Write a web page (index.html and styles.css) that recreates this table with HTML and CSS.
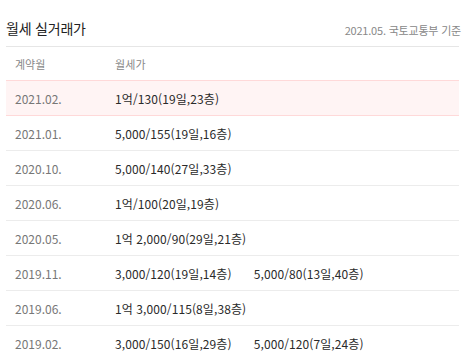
FILE: index.html
```html
<!DOCTYPE html>
<html lang="ko">
<head>
<meta charset="utf-8">
<link rel="stylesheet" href="styles.css">
</head>
<body>
<section class="panel">
  <div class="head">
    <h2 class="title">월세 실거래가</h2>
    <span class="source">2021.05. 국토교통부 기준</span>
  </div>
  <div class="table">
    <div class="row thead"><span class="date">계약월</span><span class="price">월세가</span></div>
    <div class="row active"><span class="date">2021.02.</span><span class="price"><span class="deal">1억/130(19일,23층)</span></span></div>
    <div class="row"><span class="date">2021.01.</span><span class="price"><span class="deal">5,000/155(19일,16층)</span></span></div>
    <div class="row"><span class="date">2020.10.</span><span class="price"><span class="deal">5,000/140(27일,33층)</span></span></div>
    <div class="row"><span class="date">2020.06.</span><span class="price"><span class="deal">1억/100(20일,19층)</span></span></div>
    <div class="row"><span class="date">2020.05.</span><span class="price"><span class="deal">1억 2,000/90(29일,21층)</span></span></div>
    <div class="row"><span class="date">2019.11.</span><span class="price"><span class="deal">3,000/120(19일,14층)</span><span class="deal">5,000/80(13일,40층)</span></span></div>
    <div class="row"><span class="date">2019.06.</span><span class="price"><span class="deal">1억 3,000/115(8일,38층)</span></span></div>
    <div class="row"><span class="date">2019.02.</span><span class="price"><span class="deal">3,000/150(16일,29층)</span><span class="deal">5,000/120(7일,24층)</span></span></div>
  </div>
</section>
</body>
</html>
```
FILE: styles.css
```css
html, body {
  margin: 0;
  padding: 0;
  background: #fff;
}
body {
  font-family: "Noto Sans CJK KR", "Noto Sans", sans-serif;
  color: #222;
}
.panel {
  width: 453px;
  margin-left: 6px;
}
.head {
  height: 36px;
  padding-top: 10px;
  display: flex;
  align-items: center;
  justify-content: space-between;
}
.title {
  margin: 0;
  font-size: 14px;
  font-weight: 400;
  color: #222;
  letter-spacing: -0.2px;
}
.source {
  font-size: 11px;
  color: #888;
  letter-spacing: -0.2px;
  margin-right: -2px;
  padding-top: 3px;
}
.table {
  border-top: 1px solid #e6e6e6;
}
.row {
  display: grid;
  grid-template-columns: 100px 1fr;
  align-items: center;
  height: 34px;
  padding-left: 9px;
  border-bottom: 1px solid #ececec;
  font-size: 12px;
}
.row.thead {
  height: 33px;
  border-bottom: none;
  font-size: 11px;
}
.row.active {
  background: #fff4f4;
  border-top: 1px solid #ffd9d9;
  border-bottom: 1px solid #ffd9d9;
}
.date {
  color: #777;
}
.thead .date,
.thead .price {
  color: #888;
}
.price {
  display: flex;
  gap: 22px;
  color: #2a2a2a;
  letter-spacing: 0.1px;
}
```
